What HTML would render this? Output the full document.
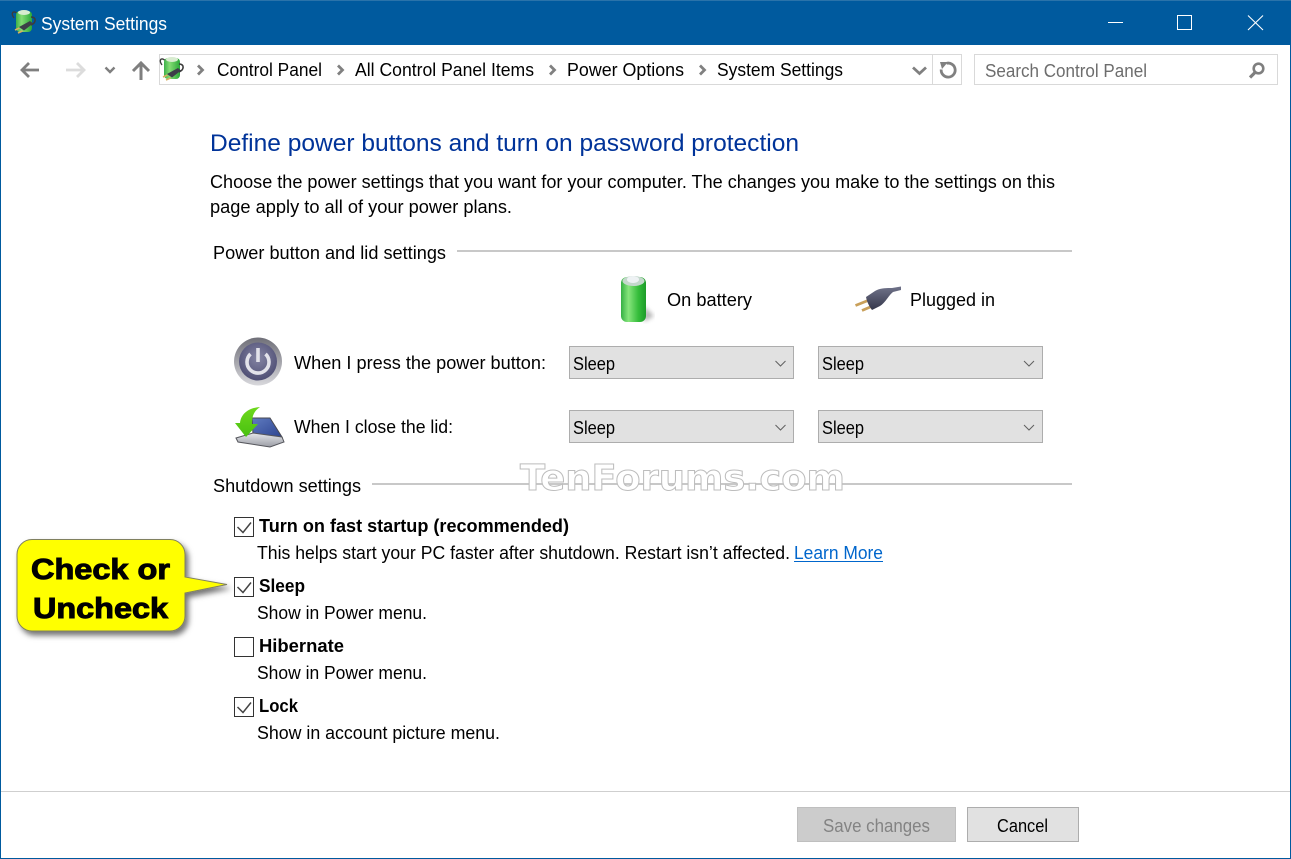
<!DOCTYPE html>
<html lang="en"><head><meta charset="utf-8"><title>System Settings</title>
<style>
html,body{margin:0;padding:0;background:#fff;width:1291px;height:859px;overflow:hidden}
svg{display:block}
text{font-family:"Liberation Sans",sans-serif;font-size:18px;fill:#000;white-space:pre}
</style></head><body>
<svg xmlns="http://www.w3.org/2000/svg" width="1291" height="859" viewBox="0 0 1291 859">
<defs>
<linearGradient id="bat" x1="0" x2="1" y1="0" y2="0"><stop offset="0" stop-color="#35b044"/><stop offset=".3" stop-color="#86e57c"/><stop offset=".7" stop-color="#34bc3a"/><stop offset="1" stop-color="#1c9c28"/></linearGradient>
<linearGradient id="bats" x1="0" x2="1" y1="0" y2="0"><stop offset="0" stop-color="#3db04a"/><stop offset=".35" stop-color="#84dc74"/><stop offset="1" stop-color="#2aa838"/></linearGradient>
<linearGradient id="ring" x1="0" x2="0" y1="0" y2="1"><stop offset="0" stop-color="#6f6f78"/><stop offset="1" stop-color="#d8d8dc"/></linearGradient>
<radialGradient id="disc" cx=".5" cy=".4" r=".65"><stop offset="0" stop-color="#8585a4"/><stop offset="1" stop-color="#4a4a70"/></radialGradient>
<linearGradient id="plug" x1="0" x2="0" y1="0" y2="1"><stop offset="0" stop-color="#70738a"/><stop offset="1" stop-color="#34364a"/></linearGradient>
<linearGradient id="arr" x1="0" x2="0" y1="0" y2="1"><stop offset="0" stop-color="#6ed81c"/><stop offset="1" stop-color="#48c010"/></linearGradient>
<linearGradient id="scr" x1="0" x2="1" y1="0" y2="1"><stop offset="0" stop-color="#5f7bc0"/><stop offset="1" stop-color="#2d4490"/></linearGradient>
<linearGradient id="base" x1="0" x2="0" y1="0" y2="1"><stop offset="0" stop-color="#e6e8ec"/><stop offset="1" stop-color="#9a9ca4"/></linearGradient>
<filter id="sh" x="-20%" y="-20%" width="150%" height="150%"><feDropShadow dx="3" dy="4" stdDeviation="3" flood-color="#000" flood-opacity=".55"/></filter>
<filter id="bl"><feGaussianBlur stdDeviation="2"/></filter>
<g id="smallbat">
<path d="M7 6C1 1 0 6 3 10" fill="none" stroke="#3c3c3c" stroke-width="1.400"/>
<rect x="5" y="3" width="16" height="21" rx="4" fill="url(#bats)"/>
<ellipse cx="13" cy="4.500" rx="6" ry="2.500" fill="#d8ecd0"/>
<path d="M20 9C26 9 25 15 20 17" fill="none" stroke="#3c3c3c" stroke-width="1.600"/>
<path d="M8 19L19 13L22 15.500L13 22.500Z" fill="#3c3e48"/>
<path d="M8.500 20L4 22M11.500 23L7 25" stroke="#d8b060" stroke-width="1.600"/>
</g>
</defs>

<!-- window frame -->
<rect x="0.500" y="0.500" width="1290" height="858" fill="#fff" stroke="#005a9e"/>
<rect x="0" y="0" width="1291" height="45" fill="#005a9e"/>
<rect x="0" y="0" width="1291" height="1" fill="#2a73aa"/>
<use href="#smallbat" x="11" y="8"/>
<text x="41" y="30" style="fill:#fff" textLength="126" lengthAdjust="spacingAndGlyphs">System Settings</text>
<!-- caption buttons -->
<rect x="1108" y="22" width="15" height="1" fill="#fff"/>
<rect x="1177.500" y="15.500" width="14" height="14" fill="none" stroke="#fff"/>
<path d="M1248 15.500L1263 30M1263 15.500L1248 30" stroke="#fff" stroke-width="1.100" fill="none"/>

<!-- nav arrows -->
<path d="M39 70H22M29 63L22 70L29 77" fill="none" stroke="#7f7f7f" stroke-width="2.800"/>
<path d="M66 70H84M77 63L84 70L77 77" fill="none" stroke="#dcdcdc" stroke-width="2.800"/>
<path d="M105.500 67.500L110 72L114.500 67.500" fill="none" stroke="#7f7f7f" stroke-width="2.400"/>
<path d="M141 80V64M133 71L141 63L149 71" fill="none" stroke="#7f7f7f" stroke-width="3"/>

<!-- address bar -->
<rect x="159.500" y="54.500" width="802" height="30" fill="#fff" stroke="#d9d9d9"/>
<rect x="932" y="55" width="1" height="29" fill="#d9d9d9"/>
<use href="#smallbat" x="159" y="55"/>
<g fill="none" stroke="#808080" stroke-width="2.800">
<path d="M198 65.500L202.500 70L198 74.500"/>
<path d="M338 65.500L342.500 70L338 74.500"/>
<path d="M550 65.500L554.500 70L550 74.500"/>
<path d="M700 65.500L704.500 70L700 74.500"/>
<path d="M913 67.500L919.500 73.500L926 67.500"/>
<path d="M946.500 63.300A7 7 0 1 1 941.200 69.500"/>
</g>
<text x="217" y="76" textLength="105" lengthAdjust="spacingAndGlyphs">Control Panel</text>
<text x="355" y="76" textLength="179" lengthAdjust="spacingAndGlyphs">All Control Panel Items</text>
<text x="567" y="76" textLength="117" lengthAdjust="spacingAndGlyphs">Power Options</text>
<text x="717" y="76" textLength="126" lengthAdjust="spacingAndGlyphs">System Settings</text>
<path d="M940 62H948L942 69Z" fill="#808080"/>

<!-- search -->
<rect x="974.500" y="54.500" width="303" height="30" fill="#fff" stroke="#d9d9d9"/>
<text x="985" y="77" style="fill:#6d6d6d" textLength="162" lengthAdjust="spacingAndGlyphs">Search Control Panel</text>
<circle cx="1258.500" cy="68.500" r="4.800" fill="none" stroke="#7f7f7f" stroke-width="2.600"/>
<path d="M1255 72.500L1250 77.500" stroke="#7f7f7f" stroke-width="3.200"/>

<!-- heading -->
<text x="210" y="151" style="fill:#003399;font-size:24px" textLength="589" lengthAdjust="spacingAndGlyphs">Define power buttons and turn on password protection</text>
<text x="210" y="188" textLength="845" lengthAdjust="spacingAndGlyphs">Choose the power settings that you want for your computer. The changes you make to the settings on this</text>
<text x="210" y="213" textLength="302" lengthAdjust="spacingAndGlyphs">page apply to all of your power plans.</text>

<text x="213" y="259" textLength="233" lengthAdjust="spacingAndGlyphs">Power button and lid settings</text>
<rect x="457" y="250" width="615" height="2" fill="#c8c8c8"/>

<!-- battery -->
<path d="M644 306L654 316L644 322Z" fill="#999" opacity=".7" filter="url(#bl)"/>
<rect x="621" y="277" width="25" height="45" rx="6" fill="url(#bat)"/>
<ellipse cx="633.500" cy="281" rx="11" ry="5" fill="#c4d8cc"/>
<ellipse cx="633" cy="279.500" rx="6" ry="3.500" fill="#eef2f4"/>
<text x="667" y="306" textLength="85" lengthAdjust="spacingAndGlyphs">On battery</text>
<!-- plug -->
<path d="M855.500 305.500L868 300.500M862 310.500L875 305" stroke="#c9a05a" stroke-width="2.800"/>
<path d="M866 297L875 291C880 288 887 288 892 288L901 286.500V290L893 292C888 296 886 302 880 306L872 310C869 306 867 302 866 297Z" fill="url(#plug)"/>
<text x="910" y="306" textLength="85" lengthAdjust="spacingAndGlyphs">Plugged in</text>

<!-- power icon -->
<circle cx="258" cy="361.500" r="24" fill="url(#ring)"/>
<circle cx="258" cy="361.500" r="19" fill="url(#disc)"/>
<path d="M250.500 354A11 11 0 1 0 265.500 354" fill="none" stroke="#e2e2ea" stroke-width="3.600"/>
<path d="M258 348V362" stroke="#e2e2ea" stroke-width="3.600"/>
<text x="294" y="369" textLength="252" lengthAdjust="spacingAndGlyphs">When I press the power button:</text>

<!-- lid icon -->
<path d="M252 418L270 418L282 437L253 434Z" fill="url(#scr)" stroke="#4a4a50" stroke-width="1"/>
<path d="M236 438L253 433L282 437L284 442L270 447L238 442Z" fill="url(#base)" stroke="#55565c" stroke-width="1"/>
<path d="M260 407C248 408 241 414 240 423L235 423L246 437L258 424L252 424C252 416 254 411 260 407Z" fill="url(#arr)"/>
<text x="294" y="433" textLength="159" lengthAdjust="spacingAndGlyphs">When I close the lid:</text>

<!-- selects -->
<g fill="#e1e1e1" stroke="#adadad">
<rect x="569.500" y="346.500" width="224" height="32"/>
<rect x="818.500" y="346.500" width="224" height="32"/>
<rect x="569.500" y="410.500" width="224" height="32"/>
<rect x="818.500" y="410.500" width="224" height="32"/>
</g>
<g fill="none" stroke="#606060" stroke-width="1">
<path d="M775.500 361L780.500 366L785.500 361"/>
<path d="M1024 361L1029 366L1034 361"/>
<path d="M775.500 425L780.500 430L785.500 425"/>
<path d="M1024 425L1029 430L1034 425"/>
</g>
<text x="573" y="370" textLength="42" lengthAdjust="spacingAndGlyphs">Sleep</text>
<text x="822" y="370" textLength="42" lengthAdjust="spacingAndGlyphs">Sleep</text>
<text x="573" y="434" textLength="42" lengthAdjust="spacingAndGlyphs">Sleep</text>
<text x="822" y="434" textLength="42" lengthAdjust="spacingAndGlyphs">Sleep</text>

<!-- shutdown -->
<text x="213" y="492" textLength="148" lengthAdjust="spacingAndGlyphs">Shutdown settings</text>
<rect x="372" y="483" width="700" height="2" fill="#c8c8c8"/>
<text x="520" y="490" style="font-family:'DejaVu Sans',sans-serif;font-size:36px;font-weight:bold;fill:#fff;stroke:#bdbdbd;stroke-width:1" textLength="325" lengthAdjust="spacingAndGlyphs">TenForums.com</text>

<!-- checkboxes -->
<g fill="#fff" stroke="#333">
<rect x="234.500" y="517.500" width="19" height="19"/>
<rect x="234.500" y="577.500" width="19" height="19"/>
<rect x="234.500" y="637.500" width="19" height="19"/>
<rect x="234.500" y="697.500" width="19" height="19"/>
</g>
<g fill="none" stroke="#444" stroke-width="1.500">
<path d="M237.500 527L243 532.500L251 522.500"/>
<path d="M237.500 587L243 592.500L251 582.500"/>
<path d="M237.500 707L243 712.500L251 702.500"/>
</g>
<text x="259" y="532" style="font-weight:bold" textLength="310" lengthAdjust="spacingAndGlyphs">Turn on fast startup (recommended)</text>
<text x="257" y="559" textLength="533" lengthAdjust="spacingAndGlyphs">This helps start your PC faster after shutdown. Restart isn’t affected.</text>
<text x="794" y="559" style="fill:#0066cc" textLength="89" lengthAdjust="spacingAndGlyphs">Learn More</text>
<rect x="794" y="561" width="89" height="1" fill="#0066cc"/>
<text x="259" y="592" style="font-weight:bold" textLength="46" lengthAdjust="spacingAndGlyphs">Sleep</text>
<text x="257" y="619" textLength="170" lengthAdjust="spacingAndGlyphs">Show in Power menu.</text>
<text x="259" y="652" style="font-weight:bold" textLength="85" lengthAdjust="spacingAndGlyphs">Hibernate</text>
<text x="257" y="679" textLength="170" lengthAdjust="spacingAndGlyphs">Show in Power menu.</text>
<text x="259" y="712" style="font-weight:bold" textLength="39" lengthAdjust="spacingAndGlyphs">Lock</text>
<text x="257" y="739" textLength="243" lengthAdjust="spacingAndGlyphs">Show in account picture menu.</text>

<!-- callout -->
<path d="M32 539.500H170A15 15 0 0 1 185 554.500V577L227 584.500L185 593V616A15 15 0 0 1 170 631H32A15 15 0 0 1 17 616V554.500A15 15 0 0 1 32 539.500Z" fill="#ffff00" stroke="#808060" stroke-width="1" filter="url(#sh)"/>
<text x="31" y="579" style="font-size:29px;font-weight:bold;stroke:#000;stroke-width:1" textLength="139" lengthAdjust="spacingAndGlyphs">Check or</text>
<text x="33" y="618" style="font-size:29px;font-weight:bold;stroke:#000;stroke-width:1" textLength="135" lengthAdjust="spacingAndGlyphs">Uncheck</text>

<!-- footer -->
<rect x="1" y="791" width="1289" height="1" fill="#cfcfcf"/>
<rect x="797.500" y="807.500" width="158" height="34" fill="#cccccc" stroke="#bfbfbf"/>
<text x="823" y="832" style="fill:#838383" textLength="107" lengthAdjust="spacingAndGlyphs">Save changes</text>
<rect x="967.500" y="807.500" width="111" height="34" fill="#e1e1e1" stroke="#adadad"/>
<text x="997" y="832" textLength="51" lengthAdjust="spacingAndGlyphs">Cancel</text>
</svg>
</body></html>
